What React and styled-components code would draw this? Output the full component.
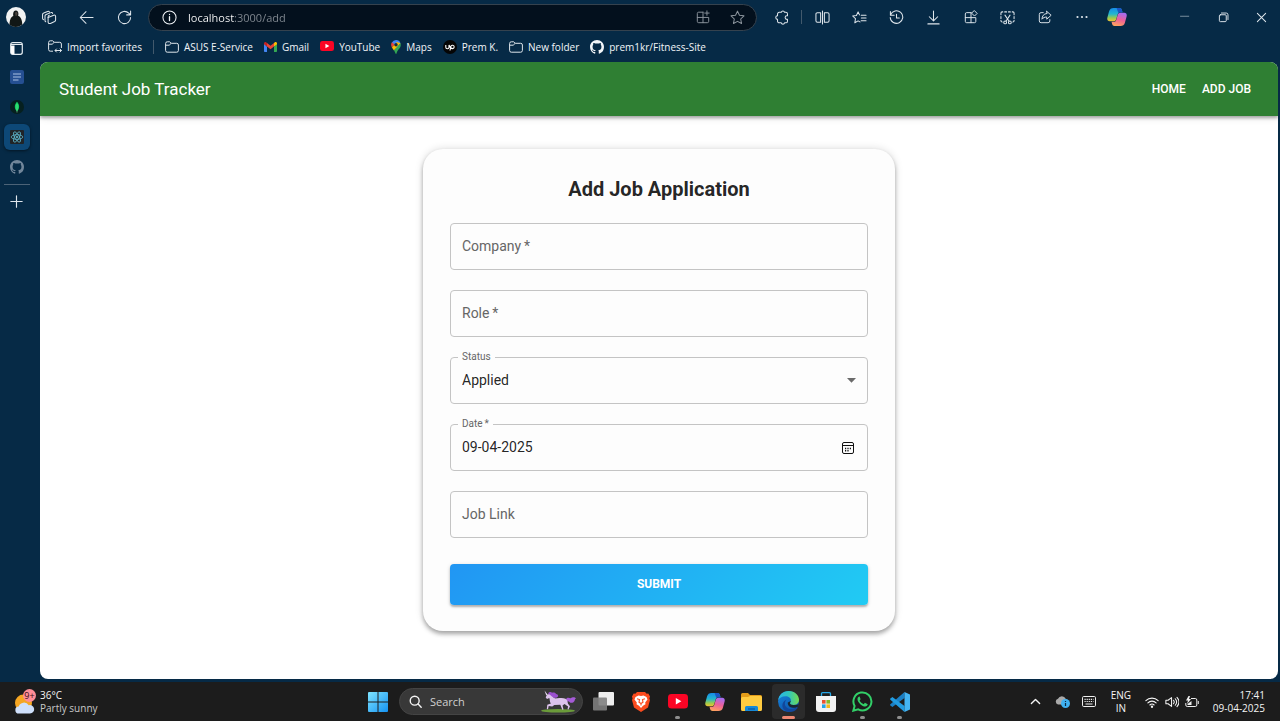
import React, { useState } from 'react';
import styled, { createGlobalStyle, css } from 'styled-components';

const ui = '"Open Sans", "Noto Sans", sans-serif';
const roboto = 'Roboto, "Liberation Sans", sans-serif';

const GlobalStyle = createGlobalStyle`
  *, *::before, *::after { box-sizing: border-box; }
  body { margin: 0; background: #062a46; }
  button, input, select { font: inherit; color: inherit; margin: 0; }
  button { border: 0; padding: 0; background: none; cursor: pointer; }
  a { color: inherit; text-decoration: none; }
  svg { display: block; flex: none; }
`;

/* ---------- layout ---------- */

const Desktop = styled.div`
  min-height: 100vh;
  display: flex;
  flex-direction: column;
  background: #062a46;
  color: #f2f5f8;
  font-family: ${ui};
  font-size: 10px;
`;

const TitleBar = styled.header`
  display: flex;
  align-items: center;
  height: 34px;
`;

const ToolButton = styled.button`
  display: grid;
  place-items: center;
  flex: none;
  width: ${(p) => p.$width || 37}px;
  height: 30px;
  color: ${(p) => (p.$dim ? '#8b949d' : '#dfe6ec')};
`;

const Divider = styled.span`
  flex: none;
  width: 1px;
  height: 14px;
  background: #42596c;
`;

const Tools = styled.div`
  display: flex;
  margin-left: 2px;
`;

const AddressBar = styled.div`
  flex: 1;
  min-width: 0;
  display: flex;
  align-items: center;
  height: 27px;
  margin: 0 6px 0 5px;
  padding: 0 2px 0 13px;
  border: 1px solid #35424e;
  border-radius: 14px;
  background: #03101d;
`;

const AddressInput = styled.input`
  flex: 1;
  min-width: 0;
  height: 20px;
  margin-left: 11px;
  padding: 0;
  border: 0;
  outline: 0;
  font-size: 11px;
  color: #ffffff;
  background: linear-gradient(90deg, #ffffff 50px, #848b93 50px);
  background: linear-gradient(90deg, #ffffff 46px, #848b93 46px);
  -webkit-background-clip: text;
  background-clip: text;
  -webkit-text-fill-color: transparent;
`;

const WindowControls = styled.div`
  display: flex;
  margin-left: 31px;
`;

const Body = styled.div`
  flex: 1;
  display: flex;
  padding: 0 2px 3px 0;
`;

const SideTabs = styled.nav`
  flex: none;
  width: 40px;
`;

const SideTab = styled.button`
  display: grid;
  place-items: center;
  width: 33px;
  height: ${(p) => p.$height || 30}px;
  color: ${(p) => (p.$dim ? '#71869a' : '#dfe6ec')};
`;

const ActiveTile = styled.span`
  display: grid;
  place-items: center;
  width: 26px;
  height: 26px;
  border-radius: 6px;
  background: #0d4877;
  box-shadow: 0 1px 3px rgba(0, 0, 0, 0.5);
`;

const SideRule = styled.hr`
  width: 26px;
  height: 1px;
  margin: 2px 0 1px 4px;
  border: 0;
  background: #4c6377;
`;

const Column = styled.div`
  flex: 1;
  min-width: 0;
  display: flex;
  flex-direction: column;
`;

const Bookmarks = styled.nav`
  display: flex;
  align-items: center;
  height: 28px;
  padding: 0 0 3px 8px;
  gap: 11px;
`;

const Bookmark = styled.a`
  display: flex;
  align-items: center;
  gap: 5px;
  line-height: 14px;
  white-space: nowrap;
`;

const Page = styled.div`
  flex: 1;
  border-radius: 8px;
  overflow: hidden;
  background: #ffffff;
  color: rgba(0, 0, 0, 0.87);
  font-family: ${roboto};
`;

const AppBar = styled.header`
  display: flex;
  align-items: center;
  height: 54px;
  padding: 0 27px 0 19px;
  gap: 16px;
  background: #2f7f33;
  color: #ffffff;
  box-shadow: 0 2px 3px rgba(0, 0, 0, 0.3), 0 1px 8px rgba(0, 0, 0, 0.14);
`;

const Brand = styled.div`
  flex: 1;
  font-size: 17px;
  line-height: 24px;
`;

const NavLink = styled.a`
  font-size: 12px;
  line-height: 20px;
  font-weight: 500;
`;

const Main = styled.main`
  padding: 33px 16px;
`;

const Card = styled.form`
  max-width: 472px;
  margin: 0 auto;
  padding: 26px 27px;
  border-radius: 20px;
  background: #fdfdfd;
  box-shadow: 0 3px 4px rgba(0, 0, 0, 0.3), 0 0 8px rgba(0, 0, 0, 0.14);
`;

const Title = styled.h1`
  margin: 0 0 20px;
  font-size: 20px;
  line-height: 28px;
  font-weight: 700;
  text-align: center;
`;

const Fields = styled.div`
  display: grid;
  gap: 20px;
`;

const Field = styled.div`
  position: relative;
  display: flex;
  align-items: center;
  height: 47px;
  border: 1px solid #c4c4c4;
  border-radius: 4px;
`;

const FieldLabel = styled.label`
  position: absolute;
  left: 7px;
  padding: 0 4px;
  pointer-events: none;
  background: #fdfdfd;
  color: #666666;
  ${(p) =>
    p.$floating
      ? css`
          top: -7px;
          font-size: 10px;
          line-height: 12px;
        `
      : css`
          top: 13px;
          font-size: 14px;
          line-height: 18px;
        `}
`;

const control = css`
  flex: 1;
  min-width: 0;
  height: 45px;
  padding: 0 11px 2px;
  border: 0;
  outline: 0;
  background: transparent;
  font-size: 14px;
`;

const TextInput = styled.input`
  ${control}
`;

const Select = styled.select`
  ${control}
  appearance: none;
`;

const SelectArrow = styled.svg`
  position: absolute;
  right: 11px;
  pointer-events: none;
`;

const CalendarButton = styled.button`
  display: grid;
  place-items: center;
  width: 14px;
  height: 24px;
  margin-right: 12px;
  color: #111111;
`;

const Submit = styled.button`
  width: 100%;
  height: 41px;
  margin-top: 26px;
  padding-bottom: 2px;
  border-radius: 4px;
  background: linear-gradient(135deg, #2196f3 0%, #21cbf3 100%);
  color: #ffffff;
  font-size: 12px;
  font-weight: 700;
  box-shadow: 0 2px 2px rgba(0, 0, 0, 0.24), 0 1px 4px rgba(0, 0, 0, 0.14);
`;

/* ---------- taskbar ---------- */

const Taskbar = styled.footer`
  display: grid;
  grid-template-columns: 1fr auto 1fr;
  align-items: center;
  height: 39px;
  background: #1c1c1c;
  color: #f5f5f5;
`;

const Weather = styled.button`
  display: flex;
  align-items: center;
  justify-self: start;
  gap: 4px;
  padding-left: 14px;
  line-height: 13px;
  text-align: left;
`;

const Muted = styled.div`
  color: #c8c8c8;
`;

const Apps = styled.div`
  display: flex;
  align-items: center;
  padding-right: 3px;
`;

const AppButton = styled.button`
  position: relative;
  display: grid;
  place-items: center;
  width: 37px;
  height: 37px;
  &::before {
    content: '';
    position: absolute;
    inset: 1px 2px;
    border-radius: 4px;
    background: ${(p) => (p.$active ? '#2b2b2b' : 'transparent')};
  }
  &::after {
    content: '';
    position: absolute;
    bottom: 1px;
    width: ${(p) => (p.$active ? 13 : 5)}px;
    height: 3px;
    border-radius: 2px;
    background: ${(p) => (p.$active ? '#ee8873' : p.$open ? '#8f8f8f' : 'transparent')};
  }
  svg {
    position: relative;
  }
`;

const SearchBox = styled.label`
  display: flex;
  align-items: center;
  width: 184px;
  height: 27px;
  margin: 0 2px 0 3px;
  padding: 0 5px 0 9px;
  gap: 8px;
  border: 1px solid #444444;
  border-radius: 14px;
  background: #383838;
`;

const SearchInput = styled.input`
  flex: 1;
  min-width: 0;
  padding: 0;
  border: 0;
  outline: 0;
  background: transparent;
  font-size: 11px;
  &::placeholder {
    color: #d0d0d0;
    opacity: 1;
  }
`;

const Tray = styled.div`
  display: flex;
  align-items: center;
  justify-self: end;
  padding-right: 15px;
  line-height: 13px;
`;

const TrayButton = styled.button`
  display: grid;
  place-items: center;
  width: ${(p) => p.$width || 27}px;
  height: 30px;
  text-align: center;
`;

const Status = styled.div`
  display: flex;
  margin-left: 3px;
`;

const Clock = styled.button`
  margin-left: 11px;
  text-align: right;
`;

/* ---------- icons ---------- */

const Line = ({ size = 16, children, sw = 1.1 }) => (
  <svg width={size} height={size} viewBox="0 0 16 16" fill="none" stroke="currentColor" strokeWidth={sw} strokeLinecap="round" strokeLinejoin="round" aria-hidden="true">
    {children}
  </svg>
);

const Avatar = () => (
  <svg width="20" height="20" viewBox="0 0 20 20" aria-hidden="true">
    <circle cx="10" cy="10" r="10" fill="#f1f2f2" />
    <path d="M3.500 17.500c.2-4 1-7.500 3.800-8.500-.6-3 .4-5.500 2.600-5.500s3 2.500 2.200 5.300c3 1.200 4 4.500 4.200 8.700C12.500 20.700 7 20.700 3.500 17.500z" fill="#111716" />
    <path d="M9 5.500c1-1 2.400-.6 2.600.6l-.4 2.300-1.600.5z" fill="#48403a" />
  </svg>
);
const Workspaces = () => (
  <Line size={15}>
    <path d="M6.500 8l6-2.500c1-.4 2 .1 2 1.200v4c0 .8-.4 1.300-1 1.600l-4.500 2c-1.200.5-2.500 0-2.500-1.400z" />
    <path d="M6.500 8v-.6c0-.9.500-1.500 1.300-1.800M4 12.500c-.6-.2-.8-.7-.8-1.400V6.500c0-.8.4-1.400 1.200-1.700l5-2c.9-.4 1.700 0 1.900.8M1.700 10.300c-.7-.2-1.100-.7-1.100-1.500V4.900c0-.8.400-1.400 1.200-1.700L6 1.500c.8-.3 1.600 0 1.900.7" />
  </Line>
);
const Back = () => <Line size={15}><path d="M15 8H1.500M7.500 1.800L1.300 8l6.200 6.200" /></Line>;
const Refresh = () => <Line size={15}><path d="M14.500 8a6.500 6.500 0 1 1-2-4.700l1.800 1.700M14.500 1v4.200h-4.200" /></Line>;
const Info = () => <Line size={15}><circle cx="8" cy="8" r="7" /><path d="M8 7.200v4M8 4.700v.2" strokeWidth="1.400" /></Line>;
const InstallApp = () => <Line size={14}><path d="M8 2.500H3A1.500 1.500 0 0 0 1.500 4v9A1.500 1.500 0 0 0 3 14.500h10a1.500 1.500 0 0 0 1.500-1.500V8.500h-13M8 2.500v12M12.500 1v5M10 3.500h5" /></Line>;
const Star = () => <Line size={15}><path d="M8 1.200l2.100 4.400 4.800.6-3.500 3.400.9 4.800L8 12.100l-4.300 2.300.9-4.800L1.100 6.200l4.800-.6z" /></Line>;
const Puzzle = () => <Line size={15}><path d="M4.500 2.500h2.200a1.800 1.800 0 0 1 3.500 0h1.300a1.800 1.800 0 0 1 1.800 1.800v1.900h-.6a1.900 1.900 0 0 0 0 3.800h.6v1.900a1.800 1.800 0 0 1-1.800 1.800h-1.300a1.800 1.800 0 0 1-3.500 0H4.500a1.800 1.800 0 0 1-1.800-1.800V10a1.900 1.900 0 0 1 0-3.800V4.300a1.800 1.800 0 0 1 1.800-1.800z" /></Line>;
const Split = () => <Line size={15}><path d="M6 3H2.500A1.500 1.500 0 0 0 1 4.500v7A1.500 1.500 0 0 0 2.500 13H6zM10 3h3.500A1.500 1.500 0 0 1 15 4.500v7a1.500 1.500 0 0 1-1.500 1.500H10zM8 1v14" /></Line>;
const Favorites = () => <Line size={15}><path d="M9.800 5.600H15M10 8.500h5M9.800 11.400H15M8 5.200L6.500 2 4.700 5.800l-4 .6 3 2.900-.7 4.300L6.500 11.600l2 1.100" /></Line>;
const HistoryIcon = () => <Line size={15}><path d="M1.700 5.200A6.700 6.700 0 1 1 1.300 8M1.500 1.500v4h4M8 4.500V8.500h3" /></Line>;
const Download = () => <Line size={15}><path d="M8 1v10.500M3.500 7.200L8 11.700l4.500-4.500M2 14.800h12" /></Line>;
const Extensions = () => <Line size={14}><path d="M8 3H3a1.500 1.500 0 0 0-1.500 1.500V13A1.500 1.500 0 0 0 3 14.500h9a1.500 1.500 0 0 0 1.500-1.500V8.700h-12M8 3v11.500M12 .9l3 3-3 3-3-3z" /></Line>;
const Screenshot = () => (
  <Line size={15}>
    <path d="M1 5V3.300C1 2.500 1.600 2 2.300 2H3M5 2h2M9 2h2M13 2h.7c.8 0 1.300.5 1.300 1.300V5M15 7v2M1 7v2M1 11v.5c0 .8.500 1.300 1.300 1.300M15 11v.5c0 .8-.5 1.300-1.300 1.300M5.300 5.500l4.200 6.300M10.700 5.500l-4.200 6.300" />
    <circle cx="5.500" cy="13.200" r="1.500" /><circle cx="10.500" cy="13.200" r="1.500" />
  </Line>
);
const Share = () => <Line size={14}><path d="M6 3H3.500A2 2 0 0 0 1.500 5v7.500a2 2 0 0 0 2 2h8a2 2 0 0 0 2-2V11M10 1.500l5 4.500-5 4.500V8C7.500 8 6 8.800 4.500 10.500 4.700 6.800 6.500 4.300 10 4z" /></Line>;
const More = () => <svg width="14" height="4" viewBox="0 0 14 4" fill="currentColor" aria-hidden="true"><circle cx="2.500" cy="2" r="1.100" /><circle cx="7" cy="2" r="1.100" /><circle cx="11.500" cy="2" r="1.100" /></svg>;
const Minimize = () => <Line size={12} sw={1}><path d="M2 7h11" opacity=".7" /></Line>;
const Restore = () => <Line size={11} sw={1.400}><rect x="2" y="4" width="10" height="10" rx="1.500" /><path d="M5 1.500h7A2.500 2.500 0 0 1 14.500 4v7" /></Line>;
const Close = () => <Line size={11} sw={1.500}><path d="M2 2l12 12M14 2L2 14" /></Line>;

const Copilot = ({ id, size = 20 }) => (
  <svg width={size} height={size} viewBox="0 0 20 20" aria-hidden="true">
    <defs>
      <linearGradient id={id + 'a'} x1="0" y1="0" x2="0" y2="1"><stop stopColor="#168be8" /><stop offset=".45" stopColor="#23b6cf" /><stop offset=".75" stopColor="#9acb4d" /><stop offset="1" stopColor="#f2c232" /></linearGradient>
      <linearGradient id={id + 'b'} x1=".6" y1="0" x2=".3" y2="1"><stop stopColor="#a66cf0" /><stop offset=".5" stopColor="#ee6098" /><stop offset="1" stopColor="#ffa45c" /></linearGradient>
    </defs>
    <path d="M6.500 1h6c1.400 0 2 .8 2.400 2l.6 2.200h-2.300c-1.300 0-2 .6-2.400 1.900L9.300 12c-.4 1.400-1.300 2.300-2.800 2.300H2.700C.6 14.300-.1 12.600.4 10.600l1.700-6.300C2.700 2.200 4.300 1 6.500 1z" fill={`url(#${id}a)`} />
    <path d="M13.500 19h-6c-1.400 0-2-.8-2.400-2l-.6-2.200h2.300c1.300 0 2-.6 2.400-1.900L10.700 8c.4-1.400 1.300-2.300 2.800-2.300h3.800c2.100 0 2.800 1.700 2.300 3.700l-1.700 6.300c-.6 2.100-2.200 3.300-4.400 3.300z" fill={`url(#${id}b)`} />
    <path d="M9.500 1h3c1.400 0 2 .8 2.400 2l.6 2.200h-2.300c-.8 0-1.400.3-1.800.8L10.200 2.800C10 2 9.900 1.500 9.500 1z" fill="#1b55c4" />
  </svg>
);

const Panel = () => <svg width="13" height="13" viewBox="0 0 13 13" aria-hidden="true"><rect x=".7" y=".7" width="11.600" height="11.600" rx="2" fill="none" stroke="#e6edf2" strokeWidth="1.200" /><path d="M1 3.500V11a1 1 0 0 0 1 1h2.500V3.500z" fill="#fff" /><path d="M1 2.500h11" stroke="#e6edf2" /></svg>;
const Doc = () => <svg width="14" height="14" viewBox="0 0 14 14" aria-hidden="true"><rect width="14" height="14" rx="2" fill="#254f92" /><path d="M3 4h8M3 7h8M3 10h5.500" stroke="#7d9bc8" strokeWidth="1.300" /></svg>;
const Mongo = () => <svg width="14" height="14" viewBox="0 0 14 14" aria-hidden="true"><circle cx="7" cy="7" r="7" fill="#06201f" /><path d="M7 1.800c3 3 2.800 7 0 9.500-2.800-2.500-3-6.500 0-9.500z" fill="#10d35f" /><path d="M7 4v8.500" stroke="#8ce6a7" strokeWidth=".6" /></svg>;
const ReactMark = () => (
  <svg width="14" height="14" viewBox="0 0 14 14" aria-hidden="true"><rect width="14" height="14" rx="1" fill="#202428" />
    <g fill="none" stroke="#64c6dd" strokeWidth=".7"><ellipse cx="7" cy="7" rx="5.800" ry="2.300" /><ellipse cx="7" cy="7" rx="5.800" ry="2.300" transform="rotate(60 7 7)" /><ellipse cx="7" cy="7" rx="5.800" ry="2.300" transform="rotate(120 7 7)" /></g><circle cx="7" cy="7" r="1" fill="#64c6dd" /></svg>
);
const GitHub = () => (
  <svg width="14" height="14" viewBox="0 0 16 16" fill="currentColor" aria-hidden="true">
    <path d="M8 0C3.580 0 0 3.580 0 8c0 3.540 2.290 6.530 5.470 7.590.4.070.55-.17.55-.38 0-.19-.01-.82-.01-1.490-2.010.37-2.530-.49-2.690-.94-.09-.23-.48-.94-.82-1.130-.28-.15-.68-.52-.01-.53.63-.01 1.080.58 1.230.82.72 1.210 1.870.87 2.330.66.07-.52.28-.87.51-1.070-1.780-.2-3.640-.89-3.640-3.950 0-.87.31-1.590.82-2.150-.08-.2-.36-1.020.08-2.120 0 0 .67-.21 2.200.82.64-.18 1.320-.27 2-.27s1.360.09 2 .27c1.530-1.040 2.200-.82 2.200-.82.44 1.100.16 1.920.08 2.120.51.56.82 1.270.82 2.150 0 3.070-1.870 3.750-3.650 3.950.29.25.54.73.54 1.480 0 1.070-.01 1.930-.01 2.200 0 .21.15.46.55.38A8.010 8.010 0 0 0 16 8c0-4.420-3.580-8-8-8z" />
  </svg>
);
const Plus = () => <Line size={13} sw={1.400}><path d="M8 1v14M1 8h14" /></Line>;

const Folder = () => <svg width="14" height="12" viewBox="0 0 14 12" fill="none" stroke="#dfe6ec" aria-hidden="true"><path d="M.6 9.500v-7A1.700 1.700 0 0 1 2.300.8h2.300l1.600 1.500h5.500a1.700 1.700 0 0 1 1.700 1.700v5.500a1.700 1.700 0 0 1-1.700 1.700H2.300A1.700 1.700 0 0 1 .6 9.500zM.8 4.200h3.400l2-1.900" /></svg>;
const ImportFolder = () => <svg width="14" height="13" viewBox="0 0 14 13" fill="none" stroke="#dfe6ec" aria-hidden="true"><path d="M5 11.200H2.300A1.700 1.700 0 0 1 .6 9.500v-7A1.700 1.700 0 0 1 2.300.8h2.300l1.600 1.500h5.500a1.700 1.700 0 0 1 1.700 1.700v4M.8 4.200h3.400l2-1.900M7 10.500h6.500M8.700 8.700L7 10.500l1.700 1.800M11.800 8.700l1.700 1.800-1.700 1.800" /></svg>;
const Gmail = () => <svg width="13" height="10" viewBox="0 0 13 10" aria-hidden="true"><path d="M0 1.500V9c0 .6.4 1 1 1h2V4.500z" fill="#4285f4" /><path d="M10 10h2c.6 0 1-.4 1-1V1.500l-3 3z" fill="#34a853" /><path d="M3 4.500V1l3.500 2.700L10 1v3.500L6.500 7.200z" fill="#ea4335" /><path d="M0 1.500C0 .2 1.400-.4 2.400.4L3 1v3.500L0 2.300z" fill="#c5221f" /><path d="M13 1.500c0-1.300-1.400-1.900-2.400-1.100L10 1v3.500l3-2.200z" fill="#fbbc04" /></svg>;
const YouTube = ({ size = 14 }) => <svg width={size} height={size * 0.72} viewBox="0 0 20 14.400" aria-hidden="true"><rect width="20" height="14.400" rx="3.500" fill="#fb0525" /><path d="M7.800 4v6.400l5.600-3.200z" fill="#fff" /></svg>;
const Maps = () => <svg width="10" height="14" viewBox="0 0 10 14" aria-hidden="true"><path d="M5 0a4.800 4.800 0 0 1 4.500 3.300L5 8.500.9 2.500A4.800 4.800 0 0 1 5 0z" fill="#4285f4" /><path d="M.9 2.300l2.800 2.200-2.800 3C-.1 5.900-.2 3.900.9 2.300z" fill="#ea4335" /><path d="M.9 7.500l5-5.500L9.500 3.300 3 10.500z" fill="#fbbc04" /><path d="M9.500 3.300c.8 2.300-.2 4-1.700 5.700C6.200 11 5.900 12.300 5.500 13.600c-.2.500-.8.500-1 0C4 12 3.500 11 3 10.200z" fill="#34a853" /><circle cx="5" cy="4.700" r="1.700" fill="#102a44" /></svg>;
const Upwork = () => <svg width="14" height="14" viewBox="0 0 14 14" aria-hidden="true"><circle cx="7" cy="7" r="7" fill="#050505" /><path d="M2.800 5v2.200a1.600 1.600 0 0 0 3.200 0V5c.6 1.800 1.500 3.600 3.500 3.600a1.700 1.700 0 1 0-1.700-2L7 10.500" fill="none" stroke="#fff" strokeWidth="1.100" /></svg>;

const Calendar = () => <svg width="12" height="12" viewBox="0 0 12 12" fill="none" stroke="currentColor" aria-hidden="true"><rect x=".5" y=".5" width="11" height="11" rx="1.500" /><path d="M.5 3.500h11" /><path d="M3 6.500h1.200M5.400 6.500h1.200M7.800 6.500H9M3 8.700h1.200M5.400 8.700h1.200" strokeWidth="1.500" /></svg>;

const WeatherIcon = () => (
  <svg width="22" height="26" viewBox="0 0 22 26" aria-hidden="true">
    <circle cx="9.500" cy="14" r="8.500" fill="#f5a623" />
    <path d="M5 24.500a3.500 3.500 0 0 1-.3-7 5.500 5.500 0 0 1 10-1.200 4.200 4.200 0 1 1 1.300 8.200z" fill="#cfe0fb" />
    <circle cx="15.500" cy="6.500" r="6.500" fill="#ff8d97" />
    <text x="15.500" y="10" textAnchor="middle" fontSize="9" fill="#3a1015">9+</text>
  </svg>
);
const Windows = () => <svg width="20" height="20" viewBox="0 0 20 20" aria-hidden="true"><defs><linearGradient id="win" x1="0" y1="0" x2="1" y2="1"><stop stopColor="#7fe4ff" /><stop offset="1" stopColor="#1492f2" /></linearGradient></defs><path d="M0 1a1 1 0 0 1 1-1h8.500v9.500H0zM10.500 0H19a1 1 0 0 1 1 1v8.500h-9.500zM0 10.500h9.500V20H1a1 1 0 0 1-1-1zM10.500 10.500H20V19a1 1 0 0 1-1 1h-8.500z" fill="url(#win)" /></svg>;
const Magnifier = () => <Line size={13} sw={1.700}><circle cx="7" cy="7" r="5.500" /><path d="M11.200 11.200L15 15" /></Line>;
const Unicorn = () => (
  <svg width="36" height="23" viewBox="0 0 36 23" aria-hidden="true">
    <ellipse cx="17" cy="20.700" rx="17" ry="1.800" fill="#6b9b3a" />
    <path d="M25 9c2-3 4 0 5-1s4-1.500 5 .5c-1 .3-1 1.200-1.500 2.500-1 2-4 2.500-5 1-1-1.300-1.800-1-3 0z" fill="#a55bd6" />
    <path d="M6 4.500L9 4c1 0 2 .8 3 2.500 1 2 2 2 4.500 1.800 3-.3 6-.5 8 .5 2 1 2 3.200 2.500 5l2 2.500-1.500 3.200-1-.3.600-2.800-3.600-2.400-2 1.500 1 4-1.200.2-2-5-6 .3-2 1.500-3.600-.5-.7 3.300-1.200-.2.500-4.300 3.600-1.300C8.500 12 9 9.500 8.300 8L6 9 4.700 7.500z" fill="#dcc3ec" />
    <path d="M7 3.500c1.500-2 3.500-1.500 4-.7 2-.6 3.500 0 4 1.200 1.500.2 2.500 1.200 2 2.500-1 1.500-2.500 1-3.500 1.500C11.500 7.500 10 5 7 3.500z" fill="#9a50cf" />
    <path d="M6.500 4.500L3.500.5l1.700 4.800z" fill="#f0dff8" />
  </svg>
);
const TaskView = () => <svg width="21" height="19" viewBox="0 0 21 19" aria-hidden="true"><rect x="5.500" y="0" width="15.500" height="13.500" rx="1" fill="#eeeeee" /><rect x="0" y="5.500" width="14" height="13" rx="1" fill="#808080" opacity=".9" /></svg>;
const Brave = () => <svg width="18" height="20" viewBox="0 0 18 20" aria-hidden="true"><path d="M5 0h8l1.700 1.800 1.600-.2L18 4.500l-.6 2L18 8l-2 7.500L9 20l-7-4.500L0 8l.6-1.500-.6-2 1.700-2.900 1.600.2z" fill="#fb4b1e" /><path d="M9 4l2.500-.5 3 1.500 1 2.500-2.300 3 .3 1.700L11 13.800 9 16l-2-2.200-2.500-1.600.3-1.700-2.300-3 1-2.500 3-1.500z" fill="#fff" /><path d="M5 6.800l2.500.8-.5 2.700L9 11.500l2-1.200-.5-2.700 2.500-.8M9 11.500v2" stroke="#fb4b1e" fill="none" strokeWidth="1.100" /></svg>;
const Explorer = () => <svg width="21" height="18" viewBox="0 0 21 18" aria-hidden="true"><path d="M0 1.500A1.500 1.500 0 0 1 1.500 0H7l2 2h10.500A1.500 1.500 0 0 1 21 3.500V9H0z" fill="#e39c19" /><path d="M0 5.500A1.500 1.500 0 0 1 1.500 4H7l2-1h10.500A1.500 1.500 0 0 1 21 4.500v12a1.500 1.500 0 0 1-1.500 1.500h-18A1.500 1.500 0 0 1 0 16.500z" fill="#ffcb40" /><path d="M4 18v-3.500A1.500 1.500 0 0 1 5.500 13h10a1.500 1.500 0 0 1 1.500 1.500V18z" fill="#1689d8" /><path d="M7 16h7" stroke="#0a5fae" strokeWidth="1.500" /></svg>;
const Edge = () => (
  <svg width="21" height="21" viewBox="0 0 21 21" aria-hidden="true">
    <defs><linearGradient id="ea" x1="0" y1=".4" x2="1" y2=".4"><stop stopColor="#2bb5e8" /><stop offset=".5" stopColor="#30c6bd" /><stop offset="1" stopColor="#73da50" /></linearGradient><linearGradient id="eb" x1="0" y1="0" x2=".6" y2="1"><stop stopColor="#1789df" /><stop offset="1" stopColor="#0d55ae" /></linearGradient></defs>
    <circle cx="10.500" cy="10.500" r="10.500" fill="url(#eb)" />
    <path d="M20 15.500c-1 .8-3 1.500-5 1.300-3.500-.3-5.500-2.800-5.200-5.300l3-1.500 1 3 4 1 2.800-.7z" fill="#1c1c1c" opacity=".85" />
    <path d="M.1 9.500C.8 3.800 5.200 0 10.700 0 16.700 0 21 4.300 21 8.800c0 3.300-2.400 5.200-5.200 5.200-2.400 0-3.800-.9-3.800-1.700 0-.6.9-1 .9-2.800 0-2.300-2.200-4.200-5.400-4.200C4 5.300 1 7 .1 9.500z" fill="url(#ea)" />
    <path d="M7.300 10.500c-1.700 4 1.700 7.600 5.800 7.600 2.700 0 4.600-1.200 5.600-1.700.8-.4 1.200.2.800.8C17.500 20 14.500 21 11.500 21 6.500 20.600 3.300 16.600 4.700 12.500 5.400 10.500 7 9.300 8.500 8.700c-.5.400-.9 1-1.200 1.800z" fill="#12479b" />
  </svg>
);
const Store = () => <svg width="20" height="20" viewBox="0 0 20 20" aria-hidden="true"><path d="M5.500 5V1.700C5.500 1 6 .7 6.500.7h7c.6 0 1 .3 1 1V5" fill="none" stroke="#25a7e8" strokeWidth="1.300" /><path d="M0 4h20v13a3 3 0 0 1-3 3H3a3 3 0 0 1-3-3z" fill="#f2f2f2" /><path d="M6 8h3.600v3.600H6z" fill="#ea5230" /><path d="M10.400 8H14v3.600h-3.600z" fill="#84b929" /><path d="M6 12.400h3.600V16H6z" fill="#24a3e8" /><path d="M10.400 12.400H14V16h-3.600z" fill="#f5ba1d" /></svg>;
const WhatsApp = () => <svg width="21" height="21" viewBox="0 0 21 21" aria-hidden="true"><path d="M1.300 19.700l1.300-4.800a9 9 0 1 1 3.600 3.500z" fill="none" stroke="#32cf68" strokeWidth="2" /><path d="M7.200 5.500c-.4 0-1.700.8-1.700 2.700 0 3.500 5 7.300 7.700 7.300 1.500 0 2.500-1.200 2.500-2.300l-2.800-1.400-1.200 1.400c-1.700-.6-3.300-2-4.100-3.700l1-1.200-1-2.700z" fill="#32cf68" /></svg>;
const VSCode = () => <svg width="20" height="20" viewBox="0 0 20 20" aria-hidden="true"><path d="M14.500 0v5.900L2.400 15.100.4 13.600c-.5-.4-.5-1 0-1.400z" fill="#1a7fc4" /><path d="M14.500 20v-5.900L2.400 4.900.4 6.400c-.5.4-.5 1 0 1.400z" fill="#219be0" /><path d="M14.500 0L20 2.500v15L14.500 20z" fill="#44b4f2" /></svg>;

const Chevron = () => <Line size={11} sw={2}><path d="M2 11l6-6 6 6" /></Line>;
const OneDrive = () => <svg width="15" height="13" viewBox="0 0 15 13" aria-hidden="true"><path d="M3 9.500a3 3 0 0 1 0-5.800 4.200 4.200 0 0 1 7.700 0 3 3 0 0 1 0 5.800z" fill="#a9a9a9" /><circle cx="10.500" cy="8.500" r="4.500" fill="#3fb0f0" /><path d="M10.500 8v3M10.500 6v1" stroke="#0c2940" strokeWidth="1.200" /></svg>;
const Keyboard = () => <svg width="14" height="11" viewBox="0 0 14 11" fill="none" stroke="#eee" aria-hidden="true"><rect x=".5" y=".5" width="13" height="10" rx="1.200" /><path d="M2.500 3.300h9M2.500 5.500h9" strokeDasharray="1.200 .9" strokeWidth="1.200" /><path d="M3.500 8h7" /></svg>;
const Wifi = () => <Line size={14} sw={1.300}><path d="M1 6.500a10 10 0 0 1 14 0M3.300 9a6.700 6.700 0 0 1 9.400 0M5.600 11.400a3.500 3.500 0 0 1 4.800 0" /><circle cx="8" cy="13.300" r=".7" fill="currentColor" /></Line>;
const Volume = () => <Line size={14} sw={1.200}><path d="M1 6v4h2.500L7.500 13V3L3.500 6zM9.700 6c1 1.200 1 2.800 0 4M11.700 4.300c1.900 2.200 1.900 5.200 0 7.400M13.700 2.700c2.800 3.200 2.800 7.400 0 10.600" /></Line>;
const Battery = () => <svg width="14" height="12" viewBox="0 0 14 12" fill="none" stroke="#eee" aria-hidden="true"><path d="M6 2.500h4.300a1.500 1.500 0 0 1 1.500 1.500v5a1.500 1.500 0 0 1-1.500 1.500h-8A1.500 1.500 0 0 1 .8 9V7" /><path d="M6.500 5v4H2.500V8z" fill="#eee" stroke="none" /><path d="M13.300 5v3" /><path d="M3.500 0L1 4.500h2L2 8l4-5H4L5 0z" fill="#eee" stroke="none" /></svg>;

/* ---------- data ---------- */

const tools = [
  ['Split screen', <Split />],
  ['Favorites', <Favorites />],
  ['History', <HistoryIcon />],
  ['Downloads', <Download />],
  ['Extensions', <Extensions />],
  ['Screenshot', <Screenshot />],
  ['Share', <Share />],
  ['Settings and more', <More />],
];

const bookmarks = [
  ['ASUS E-Service', <Folder />],
  ['Gmail', <Gmail />],
  ['YouTube', <YouTube />],
  ['Maps', <Maps />],
  ['Prem K.', <Upwork />],
  ['New folder', <Folder />],
  ['prem1kr/Fitness-Site', <GitHub />],
];

const apps = [
  { name: 'Task view', icon: <TaskView /> },
  { name: 'Brave', icon: <Brave /> },
  { name: 'YouTube', icon: <YouTube size={20} />, open: true },
  { name: 'Copilot', icon: <Copilot id="task" /> },
  { name: 'File Explorer', icon: <Explorer /> },
  { name: 'Edge', icon: <Edge />, active: true },
  { name: 'Store', icon: <Store /> },
  { name: 'WhatsApp', icon: <WhatsApp />, open: true },
  { name: 'VS Code', icon: <VSCode />, open: true },
];

export default function App() {
  const [job, setJob] = useState({ company: '', role: '', status: 'Applied', date: '09-04-2025', link: '' });
  const bind = (key) => ({
    id: key,
    value: job[key],
    onChange: (e) => setJob({ ...job, [key]: e.target.value }),
  });

  return (
    <Desktop>
      <GlobalStyle />
      <TitleBar>
        <ToolButton $width={32} aria-label="Profile"><Avatar /></ToolButton>
        <ToolButton $width={34} aria-label="Workspaces"><Workspaces /></ToolButton>
        <ToolButton $width={40} aria-label="Back"><Back /></ToolButton>
        <ToolButton aria-label="Refresh"><Refresh /></ToolButton>
        <AddressBar>
          <Info />
          <AddressInput aria-label="Address" defaultValue="localhost:3000/add" />
          <ToolButton $width={34} $dim aria-label="Install app"><InstallApp /></ToolButton>
          <ToolButton $width={34} $dim aria-label="Add to favorites"><Star /></ToolButton>
        </AddressBar>
        <ToolButton $width={38} aria-label="Add-ons"><Puzzle /></ToolButton>
        <Divider />
        <Tools>
          {tools.map(([name, icon]) => (
            <ToolButton key={name} aria-label={name}>{icon}</ToolButton>
          ))}
          <ToolButton $width={34} aria-label="Copilot"><Copilot id="top" /></ToolButton>
        </Tools>
        <WindowControls>
          <ToolButton $width={39} aria-label="Minimize"><Minimize /></ToolButton>
          <ToolButton $width={39} aria-label="Restore"><Restore /></ToolButton>
          <ToolButton $width={37} aria-label="Close"><Close /></ToolButton>
        </WindowControls>
      </TitleBar>

      <Body>
        <SideTabs>
          <SideTab $height={28} aria-label="Tab actions"><Panel /></SideTab>
          <SideTab aria-label="Docs"><Doc /></SideTab>
          <SideTab aria-label="MongoDB"><Mongo /></SideTab>
          <SideTab aria-label="React App"><ActiveTile><ReactMark /></ActiveTile></SideTab>
          <SideTab $dim aria-label="GitHub"><GitHub /></SideTab>
          <SideRule />
          <SideTab aria-label="New tab"><Plus /></SideTab>
        </SideTabs>

        <Column>
          <Bookmarks>
            <Bookmark href="#import"><ImportFolder />Import favorites</Bookmark>
            <Divider />
            {bookmarks.map(([name, icon]) => (
              <Bookmark key={name} href="#bookmark">{icon}{name}</Bookmark>
            ))}
          </Bookmarks>

          <Page>
            <AppBar>
              <Brand>Student Job Tracker</Brand>
              <NavLink href="#home">HOME</NavLink>
              <NavLink href="#add">ADD JOB</NavLink>
            </AppBar>
            <Main>
              <Card onSubmit={(e) => e.preventDefault()}>
                <Title>Add Job Application</Title>
                <Fields>
                  <Field>
                    <TextInput {...bind('company')} required />
                    <FieldLabel htmlFor="company" $floating={!!job.company}>Company&thinsp;*</FieldLabel>
                  </Field>
                  <Field>
                    <TextInput {...bind('role')} required />
                    <FieldLabel htmlFor="role" $floating={!!job.role}>Role&thinsp;*</FieldLabel>
                  </Field>
                  <Field>
                    <Select {...bind('status')}>
                      <option>Applied</option>
                      <option>Interview</option>
                      <option>Offer</option>
                      <option>Rejected</option>
                    </Select>
                    <SelectArrow width="9" height="5" viewBox="0 0 9 5" aria-hidden="true"><path d="M0 0h9L4.500 4.800z" fill="#6b6b6b" /></SelectArrow>
                    <FieldLabel htmlFor="status" $floating>Status</FieldLabel>
                  </Field>
                  <Field>
                    <TextInput {...bind('date')} required />
                    <CalendarButton type="button" aria-label="Choose date"><Calendar /></CalendarButton>
                    <FieldLabel htmlFor="date" $floating>Date&thinsp;*</FieldLabel>
                  </Field>
                  <Field>
                    <TextInput {...bind('link')} />
                    <FieldLabel htmlFor="link" $floating={!!job.link}>Job Link</FieldLabel>
                  </Field>
                </Fields>
                <Submit type="submit">SUBMIT</Submit>
              </Card>
            </Main>
          </Page>
        </Column>
      </Body>

      <Taskbar>
        <Weather>
          <WeatherIcon />
          <div>
            <div>36°C</div>
            <Muted>Partly sunny</Muted>
          </div>
        </Weather>
        <Apps>
          <AppButton aria-label="Start"><Windows /></AppButton>
          <SearchBox>
            <Magnifier />
            <SearchInput aria-label="Search" placeholder="Search" />
            <Unicorn />
          </SearchBox>
          {apps.map((a) => (
            <AppButton key={a.name} aria-label={a.name} $active={a.active} $open={a.open}>{a.icon}</AppButton>
          ))}
        </Apps>
        <Tray>
          <TrayButton aria-label="Hidden icons"><Chevron /></TrayButton>
          <TrayButton aria-label="OneDrive"><OneDrive /></TrayButton>
          <TrayButton aria-label="Touch keyboard"><Keyboard /></TrayButton>
          <TrayButton $width={36}><span>ENG<br />IN</span></TrayButton>
          <Status>
            <TrayButton $width={20} aria-label="Network"><Wifi /></TrayButton>
            <TrayButton $width={20} aria-label="Volume"><Volume /></TrayButton>
            <TrayButton $width={20} aria-label="Battery"><Battery /></TrayButton>
          </Status>
          <Clock>
            <div>17:41</div>
            <div>09-04-2025</div>
          </Clock>
        </Tray>
      </Taskbar>
    </Desktop>
  );
}
